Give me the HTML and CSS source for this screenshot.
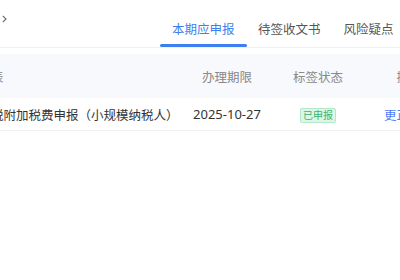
FILE: index.html
```html
<!DOCTYPE html>
<html lang="zh-CN">
<head>
  <meta charset="UTF-8">
  <title>本期应申报</title>
  <meta name="viewport" content="width=device-width, initial-scale=1">
  <link rel="stylesheet" href="styles.css">
</head>
<body>

  <div class="topbar">
    <div class="crumb">
      <svg width="5" height="8" viewBox="0 0 5 8"><path d="M0.8 0.8 L4 4 L0.8 7.2" fill="none" stroke="#666" stroke-width="1.1"/></svg>
    </div>
    <nav class="tabs">
      <a class="tab active" href="#">本期应申报</a>
      <a class="tab" href="#">待签收文书</a>
      <a class="tab" href="#">风险疑点</a>
    </nav>
  </div>

  <div class="table">
    <div class="thead">
      <div class="cell name">申报表</div>
      <div class="cell">办理期限</div>
      <div class="cell">标签状态</div>
      <div class="cell">操作</div>
    </div>
    <div class="trow">
      <div class="cell name">增值税附加税费申报（小规模纳税人）</div>
      <div class="cell date">2025-10-27</div>
      <div class="cell"><span class="tag">已申报</span></div>
      <div class="cell"><a class="link" href="#">更正申报</a></div>
    </div>
  </div>

</body>
</html>
```

FILE: styles.css
```css
* { box-sizing: border-box; }
body {
  margin: 0;
  width: 400px;
  height: 280px;
  overflow: hidden;
  background: #fff;
  font-family: 'Noto Sans', 'Noto Sans CJK SC', sans-serif;
  font-size: 12.5px;
  color: #333;
}

.topbar {
  display: flex;
  height: 48px;
  border-bottom: 1px solid #f0f1f4;
}

.crumb {
  width: 160px;
  flex-shrink: 0;
  padding: 15px 0 0 2px;
}

.crumb svg { display: block; }

.tabs {
  display: flex;
  white-space: nowrap;
}

.tab {
  position: relative;
  height: 47px;
  padding: 20px 11.5px 0;
  line-height: 20px;
  color: #555;
  text-decoration: none;
}

.tab:first-child { padding: 20px 12px 0; }

.tab.active { color: #3d7ff0; }

.tab.active::after {
  content: "";
  position: absolute;
  left: 0;
  right: 0;
  bottom: 0;
  height: 3px;
  border-radius: 2px;
  background: #3d7ff0;
}

.table {
  margin: 6px 0 0 -50px;
  width: 506px;
}

.thead, .trow {
  display: grid;
  grid-template-columns: 231.5px 91px 91px 91px;
  align-items: center;
  white-space: nowrap;
}

.thead {
  height: 44px;
  background: #f7f9fc;
  color: #888;
}

.trow {
  height: 33px;
  border-bottom: 1px solid #eef0f3;
}

.cell {
  text-align: center;
}

.cell.name {
  text-align: left;
  padding-left: 16px;
}

.date {
  font-size: 13px;
  color: #333;
}

.tag {
  display: inline-block;
  padding: 0 2px;
  font-size: 10px;
  line-height: 13px;
  color: #3cb371;
  background: #dcf6e7;
  border: 1px solid #b2e9c9;
  border-radius: 2px;
  vertical-align: middle;
}

.link {
  color: #4a7df5;
  text-decoration: none;
}
```
